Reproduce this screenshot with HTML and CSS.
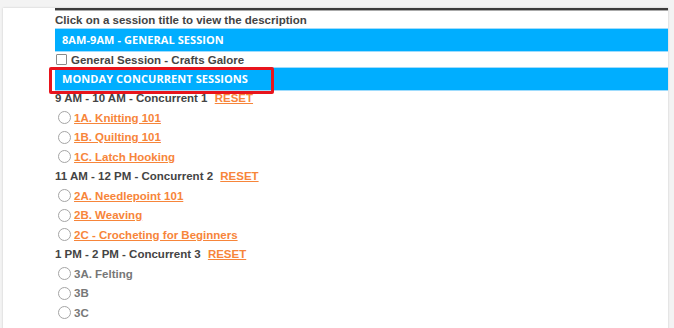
FILE: index.html
```html
<!DOCTYPE html>
<html>
<head>
<meta charset="utf-8">
<link rel="stylesheet" href="styles.css">
</head>
<body>
<div class="card">
  <div class="form">
    <div class="intro">Click on a session title to view the description</div>
    <div class="bar">8AM-9AM - GENERAL SESSION</div>
    <label class="check"><span class="box"></span>General Session - Crafts Galore</label>
    <div class="bar bar-tall">MONDAY CONCURRENT SESSIONS<span class="callout"></span></div>

    <div class="slot">9 AM - 10 AM - Concurrent 1 <a class="reset" href="#">RESET</a></div>
    <div class="opt"><span class="radio"></span><a href="#">1A. Knitting 101</a></div>
    <div class="opt"><span class="radio"></span><a href="#">1B. Quilting 101</a></div>
    <div class="opt"><span class="radio"></span><a href="#">1C. Latch Hooking</a></div>

    <div class="slot">11 AM - 12 PM - Concurrent 2 <a class="reset" href="#">RESET</a></div>
    <div class="opt"><span class="radio"></span><a href="#">2A. Needlepoint 101</a></div>
    <div class="opt"><span class="radio"></span><a href="#">2B. Weaving</a></div>
    <div class="opt"><span class="radio"></span><a href="#">2C - Crocheting for Beginners</a></div>

    <div class="slot">1 PM - 2 PM - Concurrent 3 <a class="reset" href="#">RESET</a></div>
    <div class="opt"><span class="radio"></span><span class="plain">3A. Felting</span></div>
    <div class="opt"><span class="radio"></span><span class="plain">3B</span></div>
    <div class="opt"><span class="radio"></span><span class="plain">3C</span></div>

    <div class="slot">Concurrent 4 <a class="reset" href="#">RESET</a></div>
  </div>
</div>
</body>
</html>
```

FILE: styles.css
```css
html, body {
  margin: 0;
  padding: 0;
  height: 100%;
  overflow: hidden;
}
body {
  background: #f3f3f3;
  font-family: "Liberation Sans", Arial, sans-serif;
  font-size: 11.5px;
  font-weight: bold;
  color: #444;
}
.card {
  margin: 8px 6px 0 3px;
  min-height: 340px;
  background: #fff;
  box-shadow: 0 0 2px rgba(0,0,0,0.18);
  padding-left: 52px;
}
.form {
  border-top: 2px solid #3c3c3c;
  box-shadow: inset 0 1px 0 #aaa;
}
.intro {
  padding-top: 2px;
  line-height: 16px;
}
.bar {
  position: relative;
  background: #00aeff;
  border-top: 1px solid #9fdcfd;
  border-bottom: 1px solid #9fdcfd;
  color: #fff;
  font-family: "Open Sans", sans-serif;
  font-weight: 700;
  font-size: 11px;
  letter-spacing: 0.07px;
  line-height: 22px;
  padding-left: 7px;
}
.check {
  display: flex;
  align-items: center;
  height: 15px;
  padding-left: 1px;
}
.box {
  width: 9px;
  height: 9px;
  border: 1px solid #8a8a8a;
  border-radius: 1px;
  margin-right: 4px;
  background: #fff;
}
.callout {
  position: absolute;
  left: -6px;
  top: -1px;
  width: 219px;
  height: 21px;
  border: 3px solid #e8141c;
  border-radius: 2px;
}
.slot {
  line-height: 14px;
  padding-bottom: 5.5px;
}
.reset {
  color: #f7853a;
  margin-left: 4px;
}
.opt {
  display: flex;
  align-items: center;
  height: 14px;
  padding-bottom: 5.5px;
  padding-left: 3px;
}
.radio {
  width: 11px;
  height: 11px;
  border: 1px solid #a5a5a5;
  border-radius: 50%;
  margin-right: 3px;
  background: #fff;
}
.opt a {
  color: #f7853a;
}
.plain {
  color: #777;
}
```
